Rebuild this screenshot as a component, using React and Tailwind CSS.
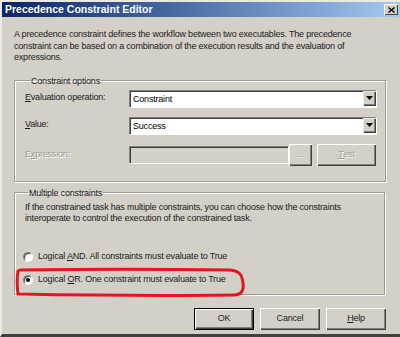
import React from "react";

const font = { fontFamily: '"Liberation Sans", Arial, sans-serif' };
const T = "text-[9px] tracking-[-0.2px]";

function U({ children }) {
  return <span className="underline underline-offset-[1px]">{children}</span>;
}

function Dropdown({ value }) {
  return (
    <div className="flex-1 h-[17px] flex bg-white border-t border-l border-[#808080] shadow-[inset_1px_1px_0_#404040,1px_1px_0_#ffffff]">
      <div className={"flex-1 pl-[3px] pt-[2px] leading-[12px] text-black " + T}>{value}</div>
      <div className="w-[13px] h-[15px] bg-[#d4d0c8] border-t border-l border-[#ece9d8] shadow-[inset_-1px_-1px_0_#404040,inset_-2px_-2px_0_#808080] flex items-center justify-center">
        <svg width="7" height="4" viewBox="0 0 7 4" className="-ml-[1px] -mt-[1px]">
          <path d="M0 0H7L3.5 4Z" fill="#000" />
        </svg>
      </div>
    </div>
  );
}

function Btn({ children, def, disabled, className = "" }) {
  return (
    <div
      className={
        "h-[22px] flex items-center justify-center bg-[#d4d0c8] " +
        T +
        " " +
        (def
          ? "border border-black shadow-[inset_1px_1px_0_#ffffff,inset_-1px_-1px_0_#404040,inset_-2px_-2px_0_#808080]"
          : "shadow-[inset_1px_1px_0_#ffffff,inset_-1px_-1px_0_#404040,inset_-2px_-2px_0_#808080]") +
        (disabled ? " text-[#a09d96] [text-shadow:1px_1px_0_#ffffff]" : " text-[#222]") +
        " " +
        className
      }
    >
      {children}
    </div>
  );
}

function Radio({ checked }) {
  return (
    <div className="w-[10px] h-[10px] rounded-full bg-white border border-t-[#808080] border-l-[#808080] border-b-[#ffffff] border-r-[#ffffff] shadow-[inset_1px_1px_0_#404040] flex items-center justify-center shrink-0">
      {checked && <div className="w-[4px] h-[4px] rounded-full bg-black" />}
    </div>
  );
}

export default function App() {
  return (
    <div
      className="relative w-[400px] h-[337px] bg-[#d4d0c8] overflow-hidden border-l-2 border-t-2 border-l-[#ece9e2] border-t-[#ece9e2] border-b-[3px] border-b-[#404040] text-[#1a1a1a]"
      style={font}
    >
      <div className="h-[15px] bg-gradient-to-r from-[#0a246a] to-[#a6caf0] flex items-center justify-between pl-[3px] pr-[2px]">
        <span className="text-white font-bold text-[10.5px] leading-none">Precedence Constraint Editor</span>
        <div className="w-[14px] h-[11px] bg-[#d4d0c8] shadow-[inset_1px_1px_0_#ffffff,inset_-1px_-1px_0_#404040] flex items-center justify-center">
          <svg width="7" height="6" viewBox="0 0 7 6">
            <path d="M0.5 0.5L6.5 5.5M6.5 0.5L0.5 5.5" stroke="#000" strokeWidth="1.4" />
          </svg>
        </div>
      </div>

      <div className="px-[12px]">
        <p className={"pt-[12px] leading-[11.5px] w-[356px] " + T}>
          A precedence constraint defines the workflow between two executables. The precedence constraint can be based on a combination of the execution results and the evaluation of expressions.
        </p>

        <fieldset className="mt-[11px] w-[371px] border border-[#9c9a94] shadow-[inset_1px_1px_0_#ffffff,1px_1px_0_#ffffff] pl-[10px] pr-[9px] pt-[3px] pb-[15px]">
          <legend className={"ml-[5px] px-[1px] leading-[12px] " + T}>Constraint options</legend>
          <div className="flex flex-col gap-[10px]">
            <div className="flex items-center">
              <div className={"w-[104px] " + T}><U>E</U>valuation operation:</div>
              <Dropdown value="Constraint" />
            </div>
            <div className="flex items-center">
              <div className={"w-[104px] " + T}><U>V</U>alue:</div>
              <Dropdown value="Success" />
            </div>
            <div className="flex items-center">
              <div className={"w-[104px] text-[#a09d96] [text-shadow:1px_1px_0_#ffffff] " + T}>E<U>x</U>pression:</div>
              <div className="w-[159px] h-[17px] border-t border-l border-[#808080] shadow-[inset_1px_1px_0_#404040,1px_1px_0_#ffffff] bg-[#d4d0c8]" />
              <Btn disabled className="w-[23px] ml-[1px]">...</Btn>
              <Btn disabled className="w-[59px] ml-[5px]"><U>T</U>est</Btn>
            </div>
          </div>
        </fieldset>

        <fieldset className="mt-[5px] w-[371px] border border-[#9c9a94] shadow-[inset_1px_1px_0_#ffffff,1px_1px_0_#ffffff] pl-[8px] pr-[9px] pt-[3px] pb-[7px]">
          <legend className={"ml-[5px] px-[1px] leading-[12px] " + T}>Multiple constraints</legend>
          <p className={"pl-[2px] leading-[11.5px] w-[350px] " + T}>
            If the constrained task has multiple constraints, you can choose how the constraints interoperate to control the execution of the constrained task.
          </p>
          <div className="mt-[26px] flex flex-col gap-[10px]">
            <div className="flex items-center gap-[5px] h-[13px]">
              <Radio />
              <span className={T}>Logical <U>A</U>ND. All constraints must evaluate to True</span>
            </div>
            <div className="flex items-center gap-[5px] h-[13px]">
              <Radio checked />
              <span className={T}>Logical <U>O</U>R. One constraint must evaluate to True</span>
            </div>
          </div>
        </fieldset>

        <div className="mt-[13px] flex justify-end gap-[6px] w-[372px]">
          <Btn def className="w-[60px]">OK</Btn>
          <Btn className="w-[60px]">Cancel</Btn>
          <Btn className="w-[60px]"><U>H</U>elp</Btn>
        </div>
      </div>

      <svg className="absolute left-[10px] top-[263px]" width="236" height="34" viewBox="0 0 236 34">
        <path
          d="M6 6 C5 12 5 22 6 29 C60 30 150 31 222 30 C229 30 232 26 231 18 C230 10 228 6 218 5 C150 4 70 4 8 5"
          fill="none"
          stroke="#e4151e"
          strokeWidth="3"
          strokeLinecap="round"
        />
      </svg>
    </div>
  );
}
